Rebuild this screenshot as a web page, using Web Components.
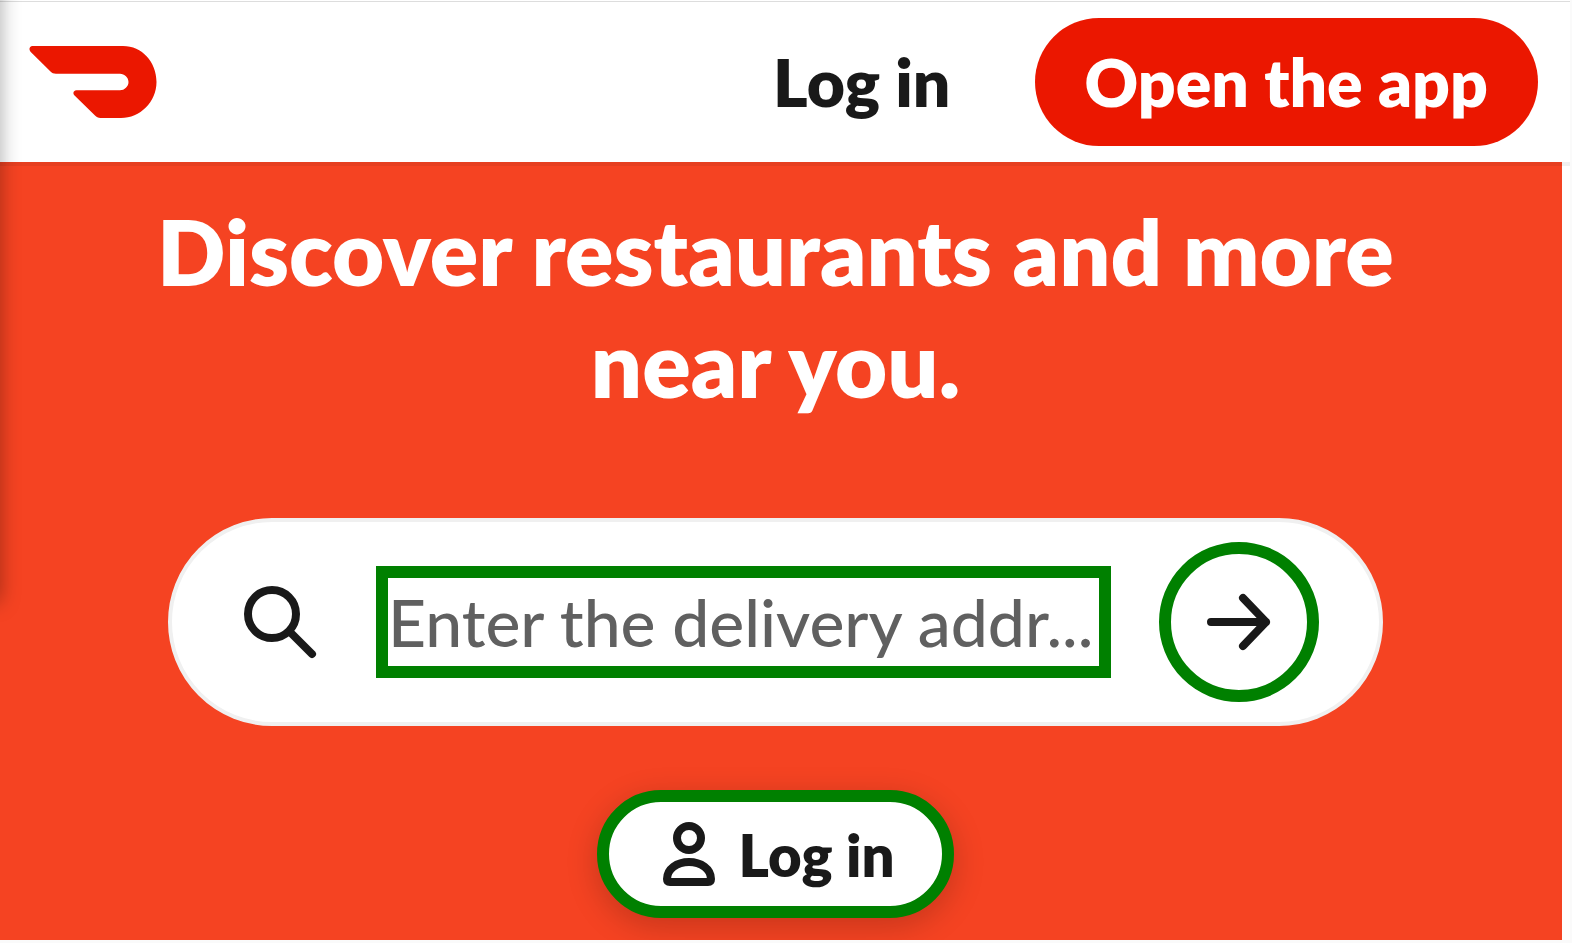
<!DOCTYPE html>
<html lang="en">
<head>
<meta charset="utf-8">
<meta name="viewport" content="width=device-width, initial-scale=1">
<title>Food delivery</title>
<style>
  html { background: #fafafa; }
  body { margin: 0; font-family: Lato, "Open Sans", sans-serif; color: #191919; }
</style>
</head>
<body>
<delivery-page></delivery-page>

<script>
const define = (name, markup) => {
  const template = document.createElement('template');
  template.innerHTML = markup;
  customElements.define(name, class extends HTMLElement {
    constructor() {
      super();
      this.attachShadow({ mode: 'open' }).append(template.content.cloneNode(true));
    }
  });
};

define('brand-logo', `
  <style>
    :host { display: block; }
    a, svg { display: block; }
  </style>
  <a href="#" aria-label="Home">
    <svg width="128" height="72" viewBox="0 0 128 72" fill="#eb1700" aria-hidden="true">
      <path d="M3.500 0H94C113 0 127.500 16 127.500 36C127.500 56 111 72 92 72H71.500C69 72 67.500 71 66 69.500L45.300 49.300C43.500 47.500 44.500 44.300 47.500 44.300H91C95.500 44.300 99.500 40.500 99.500 36C99.500 31.500 95.500 27.700 91 27.700H27C24.500 27.700 23 27 21.500 25.500L1.500 5.700C-.5 3.500 .5 0 3.500 0Z"/>
    </svg>
  </a>
`);

define('text-button', `
  <style>
    :host { display: block; }
    button {
      display: block; height: 128px; padding: 0 0 2px; border: 0; background: none;
      font: 800 66px Lato, sans-serif; color: inherit; white-space: nowrap; cursor: pointer;
    }
    :host([filled]) button { padding: 0 50px 2px; border-radius: 64px; background: #eb1700; color: #fff; }
  </style>
  <button type="button"><slot></slot></button>
`);

define('site-header', `
  <style>
    :host {
      display: flex; align-items: center; gap: 84px; box-sizing: border-box;
      height: 162px; margin-right: 2px; padding: 18px 32px 16px 29px;
      background: linear-gradient(#ddd, #ddd) 0 1px / 100% 1px no-repeat #fff;
      box-shadow: 0 4px 0 rgba(0, 0, 0, .06);
      position: relative; z-index: 1;
    }
    brand-logo { margin-right: auto; }
  </style>
  <brand-logo></brand-logo>
  <text-button>Log in</text-button>
  <text-button filled>Open the app</text-button>
`);

define('address-search', `
  <style>
    :host { display: block; }
    form {
      display: flex; align-items: center; box-sizing: border-box; height: 208px;
      padding: 0 60px; border: 4px solid #f0f0f0; border-radius: 104px; background: #fff;
    }
    svg { display: block; flex: none; }
    label { margin-right: 48px; }
    input {
      flex: 1; min-width: 0; box-sizing: border-box; height: 112px; margin-right: 48px;
      padding: 0 0 2px; border: 12px solid #008000; border-radius: 0; outline: 0;
      background: #fff; color: #191919; font: 500 66px Lato, sans-serif; text-overflow: ellipsis;
    }
    input::placeholder { color: #606060; opacity: 1; }
    button {
      display: grid; place-items: center; flex: none; width: 160px; height: 160px; padding: 0;
      border: 12px solid #008000; border-radius: 50%; background: #fff; cursor: pointer;
    }
  </style>
  <form onsubmit="return false">
    <label for="address" aria-label="Delivery address">
      <svg width="96" height="96" viewBox="0 0 96 96" fill="none" stroke="#191919" stroke-width="8" stroke-linecap="round" aria-hidden="true">
        <circle cx="40" cy="40" r="24"/><path d="M58 58L80 80"/>
      </svg>
    </label>
    <input id="address" type="text" placeholder="Enter the delivery addr...">
    <button type="submit" aria-label="Find restaurants">
      <svg width="96" height="96" viewBox="0 0 96 96" fill="none" stroke="#191919" stroke-width="8" stroke-linecap="round" stroke-linejoin="round" aria-hidden="true">
        <path d="M20 48H75M52 24L75 48L52 72"/>
      </svg>
    </button>
  </form>
`);

define('login-pill', `
  <style>
    :host { display: block; }
    button {
      display: flex; align-items: center; gap: 2px; box-sizing: border-box; height: 128px;
      padding: 0 48px 0 32px; border: 12px solid #008000; border-radius: 64px; background: #fff;
      box-shadow: 0 8px 32px rgba(0, 0, 0, .2); color: #191919;
      font: 800 58px Lato, sans-serif; white-space: nowrap; cursor: pointer;
    }
    svg { display: block; flex: none; }
  </style>
  <button type="button">
    <svg width="96" height="96" viewBox="0 0 96 96" fill="none" stroke="#191919" stroke-width="8" stroke-linejoin="round" aria-hidden="true">
      <circle cx="48" cy="32" r="12"/>
      <path d="M29 76H67C69 76 70 75 70 73C70 63 60 56 48 56C36 56 26 63 26 73C26 75 27 76 29 76Z"/>
    </svg>
    <slot></slot>
  </button>
`);

define('hero-banner', `
  <style>
    :host {
      display: flex; flex-direction: column; align-items: center; box-sizing: border-box;
      padding: 33px 11px 22px 0; background: #f54322;
    }
    h1 {
      margin: 0 0 99px; max-width: 1280px; color: #fff; text-align: center;
      font-size: 90px; line-height: 112px; font-weight: 800;
    }
    address-search { align-self: stretch; margin: 0 168px 64px; }
  </style>
  <h1><slot></slot></h1>
  <address-search></address-search>
  <login-pill>Log in</login-pill>
`);

define('delivery-page', `
  <style>
    :host { display: block; position: relative; overflow: hidden; }
    main { margin-right: 2px; background: #fff; }
    hero-banner { margin-right: 8px; }
    .edge {
      position: absolute; z-index: 2; left: -20px; top: -20px; width: 20px; height: 622px;
      box-shadow: 0 0 20px rgba(0, 0, 0, .35); pointer-events: none;
    }
  </style>
  <site-header></site-header>
  <main><hero-banner>Discover restaurants and more near you.</hero-banner></main>
  <div class="edge"></div>
`);
</script>
</body>
</html>
